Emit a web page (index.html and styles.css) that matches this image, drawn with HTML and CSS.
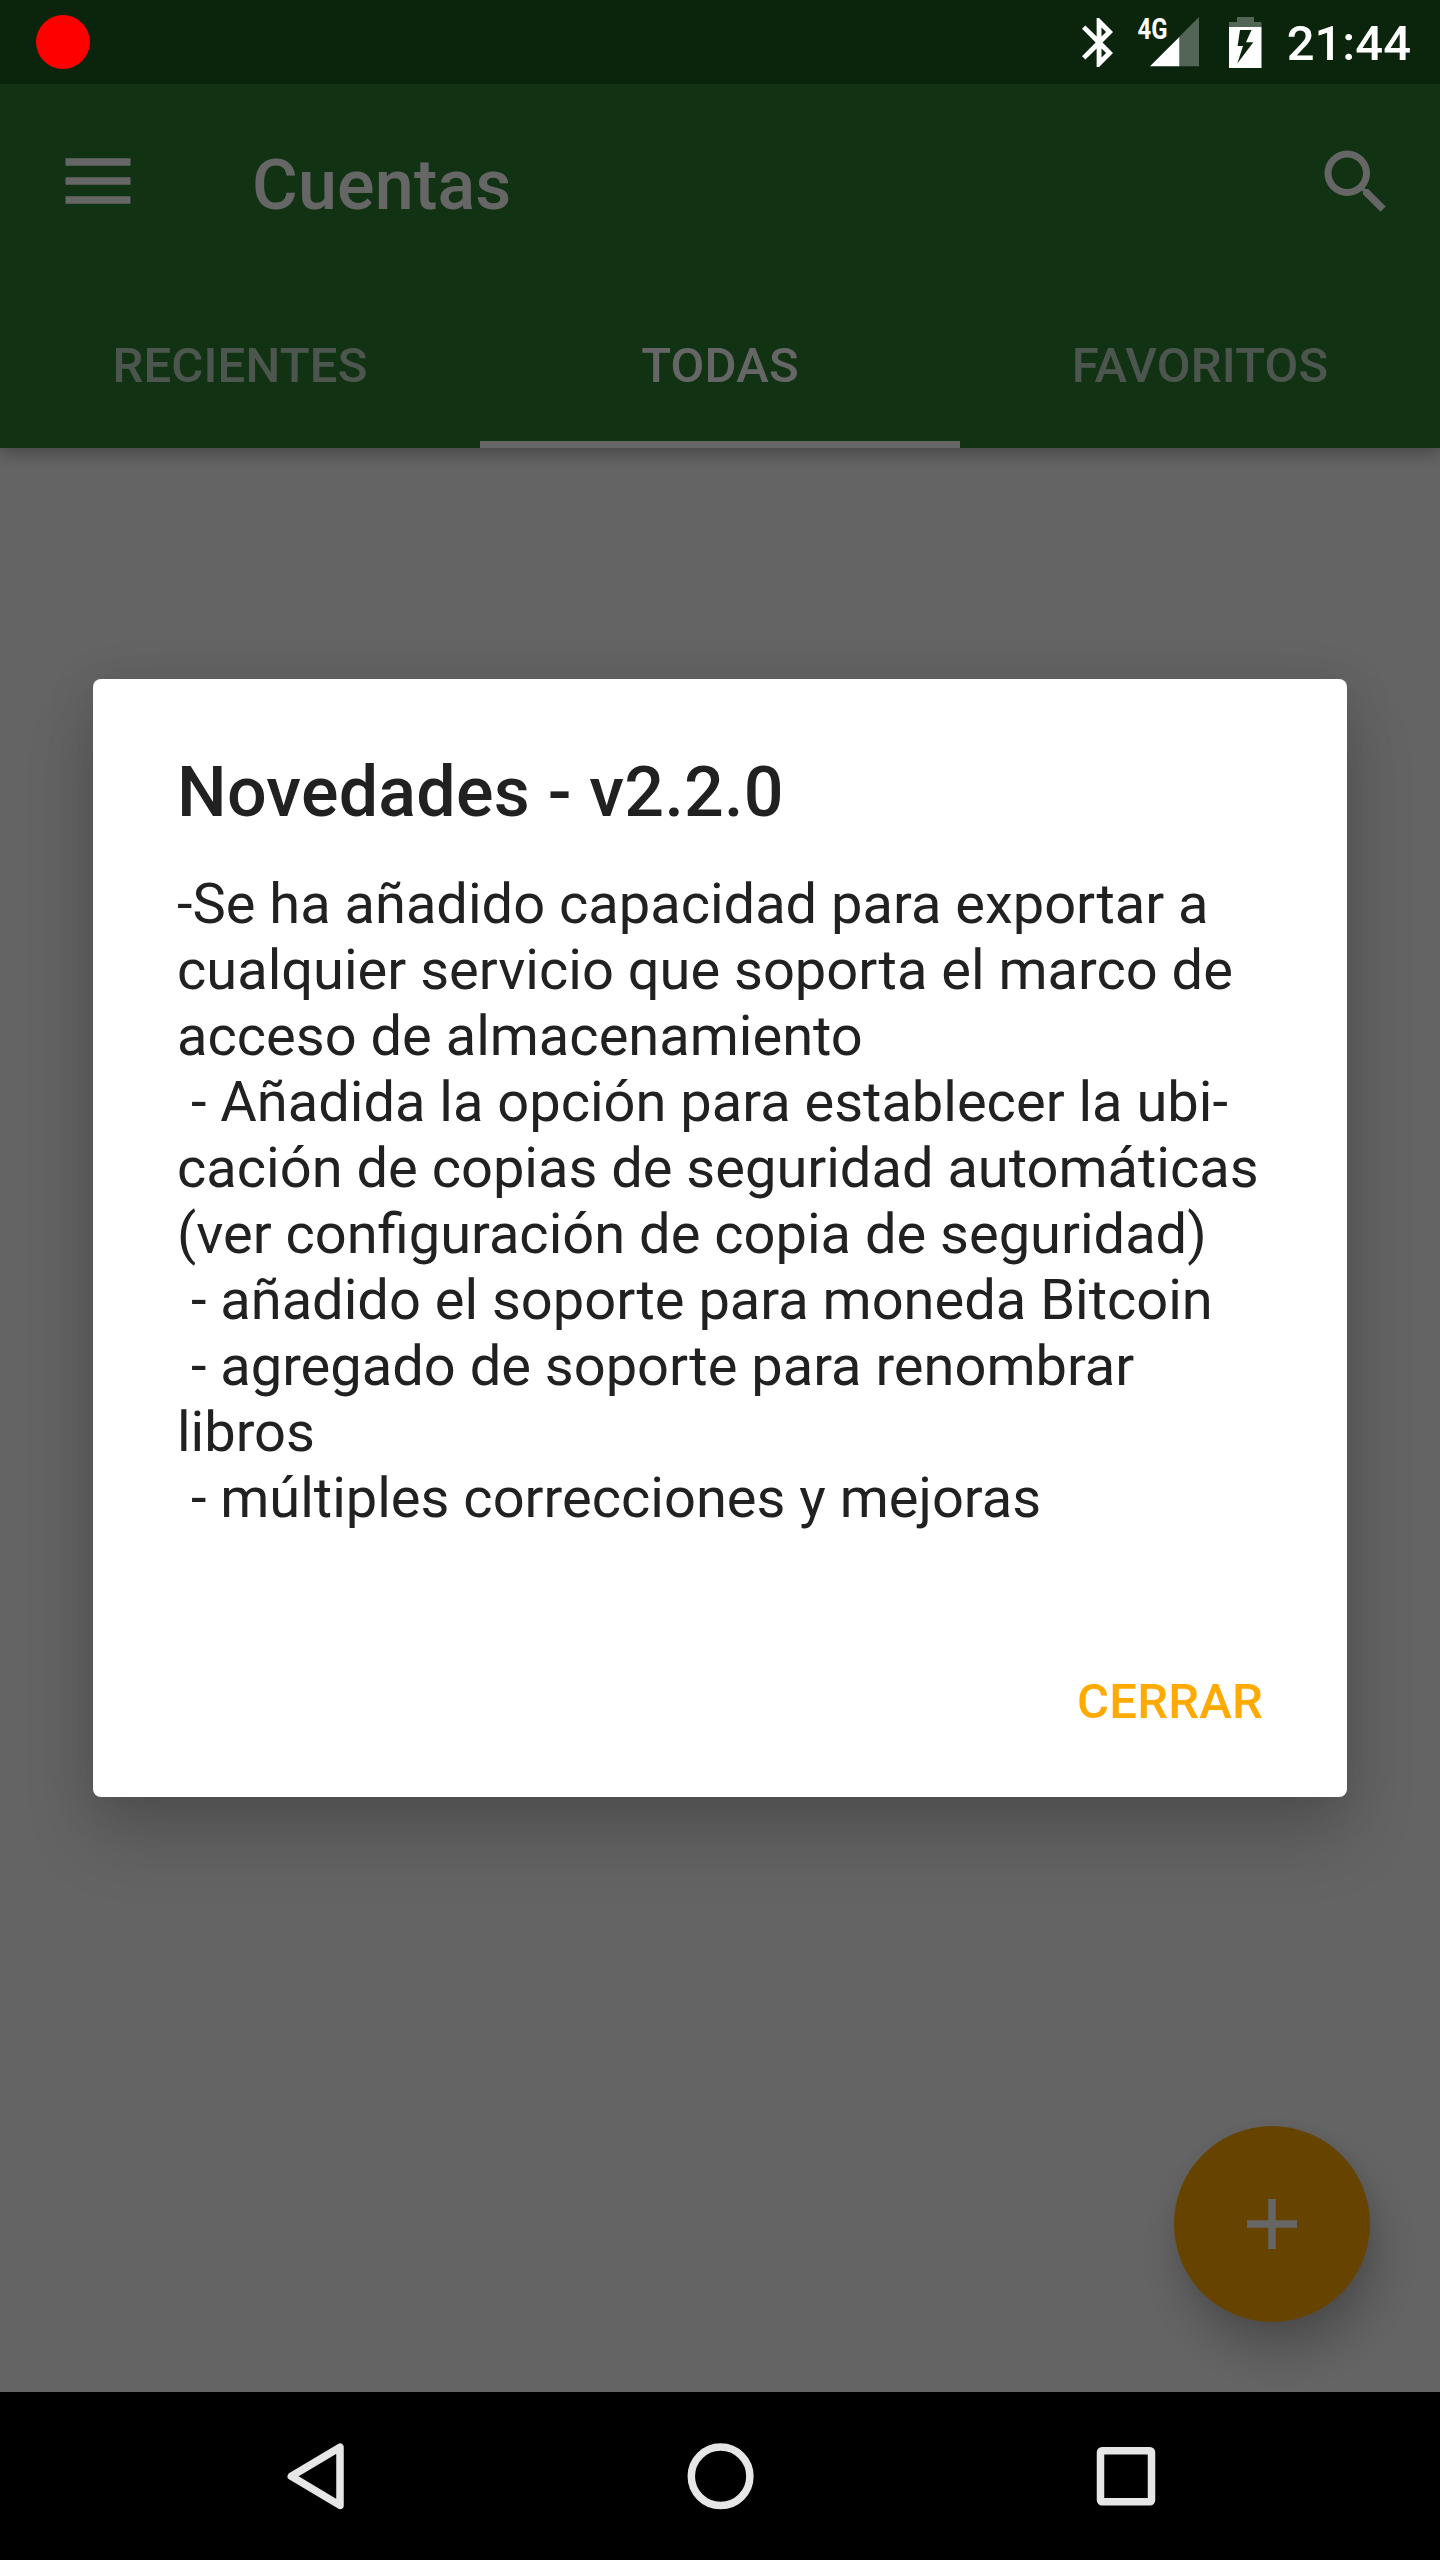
FILE: index.html
```html
<!DOCTYPE html>
<html lang="es">
<head>
<meta charset="utf-8">
<title>Cuentas</title>
<link rel="stylesheet" href="styles.css">
</head>
<body>
<div class="screen">
  <div class="app">
    <div class="status-bg"></div>
    <header class="app-bar">
      <div class="toolbar">
        <svg class="menu-icon" viewBox="0 0 66 46"><path d="M.5 .3h65v7.500H.5zM.5 19.200h65v7.500H.5zM.5 38.200h65v7.500H.5z"/></svg>
        <h1 class="toolbar-title">Cuentas</h1>
        <svg class="search-icon" viewBox="0 0 24 24"><path d="M15.5 14h-.79l-.28-.27A6.471 6.471 0 0 0 16 9.5 6.5 6.5 0 1 0 9.5 16c1.61 0 3.09-.59 4.23-1.57l.27.28v.79l5 4.99L20.49 19l-4.99-5zm-6 0C7.01 14 5 11.99 5 9.5S7.01 5 9.5 5 14 7.01 14 9.5 11.99 14 9.5 14z"/></svg>
      </div>
      <nav class="tabs">
        <span class="tab">RECIENTES</span>
        <span class="tab tab-active">TODAS</span>
        <span class="tab">FAVORITOS</span>
      </nav>
    </header>
    <main class="content">
      <button class="fab" aria-label="Añadir"><svg class="plus-icon" viewBox="0 0 50 50"><path d="M21.25 0h7.5v21.25H50v7.5H28.75V50h-7.5V28.75H0v-7.5h21.25z"/></svg></button>
    </main>
  </div>

  <div class="scrim">
    <section class="dialog">
      <h2 class="dialog-title">Novedades - v2.2.0</h2>
      <p class="dialog-body">-Se ha añadido capacidad para exportar a
cualquier servicio que soporta el marco de
acceso de almacenamiento
 - Añadida la opción para establecer la ubi-
cación de copias de seguridad automáticas
(ver configuración de copia de seguridad)
 - añadido el soporte para moneda Bitcoin
 - agregado de soporte para renombrar
libros
 - múltiples correcciones y mejoras</p>
      <div class="dialog-actions"><button class="dialog-button">CERRAR</button></div>
    </section>
  </div>

  <div class="status-bar">
    <span class="record-dot"></span>
    <svg class="bluetooth-icon" viewBox="5 2 12.71 20"><path d="M17.71 7.71L12 2h-1v7.59L6.41 5 5 6.41 10.59 12 5 17.59 6.41 19 11 14.41V22h1l5.71-5.71-4.3-4.29 4.3-4.29zM13 5.83l1.88 1.88L13 9.59V5.83zm1.88 10.46L13 18.17v-3.76l1.88 1.88z"/></svg>
    <svg class="signal-icon" viewBox="0 0 62 50">
      <path class="faint" d="M42.3 19.7L62 0v49.3H42.3z"/>
      <path d="M13 49.3L42.3 20v29.3z"/>
      <text class="network" x="0.5" y="22.3" textLength="30" lengthAdjust="spacingAndGlyphs">4G</text>
    </svg>
    <svg class="battery-icon" viewBox="0 0 32.5 51">
      <path class="faint" d="M8 0h17v5h7.500v5H0V5h8z"/>
      <path fill-rule="evenodd" d="M0 10h32.500v41H0zM11 13L8.600 29h5.400L8.300 46.500l16-21.300h-7.300L22.500 13z"/>
    </svg>
    <span class="clock">21:44</span>
  </div>

  <footer class="nav-bar">
    <svg class="nav-icon" viewBox="0 0 72 72"><path d="M60 7.200v58.200L11.300 36.300z"/></svg>
    <svg class="nav-icon" viewBox="0 0 72 72"><circle cx="35.600" cy="36.300" r="29.300"/></svg>
    <svg class="nav-icon" viewBox="0 0 72 72"><rect x="10.500" y="10.800" width="51" height="51" rx="1.500"/></svg>
  </footer>
</div>
</body>
</html>
```
FILE: styles.css
```css
* { box-sizing: border-box; }
body { margin: 0; background: #000; font-family: Roboto, "Liberation Sans", sans-serif; }
h1, h2, p { margin: 0; }
button { border: 0; padding: 0; background: none; font: inherit; }
svg { display: block; flex: none; }

.screen { position: relative; width: 1440px; height: 2560px; overflow: hidden; display: flex; flex-direction: column; }
.app { flex: 1; display: flex; flex-direction: column; overflow: hidden; background: #fafafa; }
.status-bg { height: 84px; background: #1b5e20; }

.app-bar { position: relative; background: #2e7d32; color: #fff; box-shadow: 0 7px 14px rgba(0, 0, 0, .26); }
.toolbar { height: 196px; display: flex; align-items: center; padding: 0 54px 0 65px; }
.menu-icon { width: 66px; height: 46px; margin-bottom: 3px; fill: #fff; }
.toolbar-title { flex: 1; margin-left: 121px; padding-top: 5px; font-size: 70px; font-weight: 500; line-height: 82px; letter-spacing: .2px; }
.search-icon { width: 84px; height: 84px; margin-right: -12px; fill: #fff; }

.tabs { height: 168px; display: grid; grid-template-columns: repeat(3, 1fr); }
.tab { display: flex; align-items: center; justify-content: center; border-bottom: 7px solid transparent; padding-top: 9px; font-size: 49px; font-weight: 500; letter-spacing: .2px; color: rgba(255, 255, 255, .7); }
.tab-active { color: #fff; border-bottom-color: #fff; }

.content { flex: 1; display: flex; align-items: flex-end; justify-content: flex-end; padding: 70px; }
.fab { width: 196px; height: 196px; border-radius: 50%; background: #fa0; display: flex; align-items: center; justify-content: center; box-shadow: 8px 30px 46px rgba(0, 0, 0, .22), 2px 4px 18px rgba(0, 0, 0, .07); }
.plus-icon { width: 50px; height: 50px; fill: #fff; }

.scrim { position: absolute; inset: 0 0 168px; padding-top: 84px; display: flex; align-items: center; justify-content: center; background: rgba(0, 0, 0, .6); }
.dialog { width: 1254px; height: 1118px; padding: 72px 84px 0; border-radius: 8px; background: #fff; color: #212121; box-shadow: 0 42px 70px rgba(0, 0, 0, .16), 0 6px 50px rgba(0, 0, 0, .12); }
.dialog-title { font-size: 70px; font-weight: 500; line-height: 82px; letter-spacing: .25px; }
.dialog-body { margin-top: 38px; font-size: 56px; line-height: 66px; white-space: pre; }
.dialog-actions { display: flex; justify-content: flex-end; margin-top: 142px; }
.dialog-button { font-size: 49px; font-weight: 500; line-height: 58px; letter-spacing: .2px; color: #fa0; }

.status-bar { position: absolute; inset: 0 0 auto; height: 84px; display: flex; align-items: center; padding: 0 29px 0 36px; color: #fff; fill: #fff; }
.record-dot { width: 54px; height: 54px; margin-right: auto; border-radius: 50%; background: #f00; }
.bluetooth-icon { width: 31px; height: 49px; }
.signal-icon { width: 62px; height: 50px; margin-left: 24px; overflow: visible; }
.battery-icon { width: 32.5px; height: 51px; margin-left: 30px; }
.faint { opacity: .3; }
.network { font-size: 29px; font-weight: 700; }
.clock { margin-left: 25px; padding-top: 4px; font-size: 49px; font-weight: 500; line-height: 58px; }

.nav-bar { position: relative; height: 168px; background: #000; display: flex; align-items: center; justify-content: center; gap: 333px; padding-left: 2px; }
.nav-icon { width: 72px; height: 72px; fill: none; stroke: #e6e6e6; stroke-width: 7.5; stroke-linejoin: round; }
```
